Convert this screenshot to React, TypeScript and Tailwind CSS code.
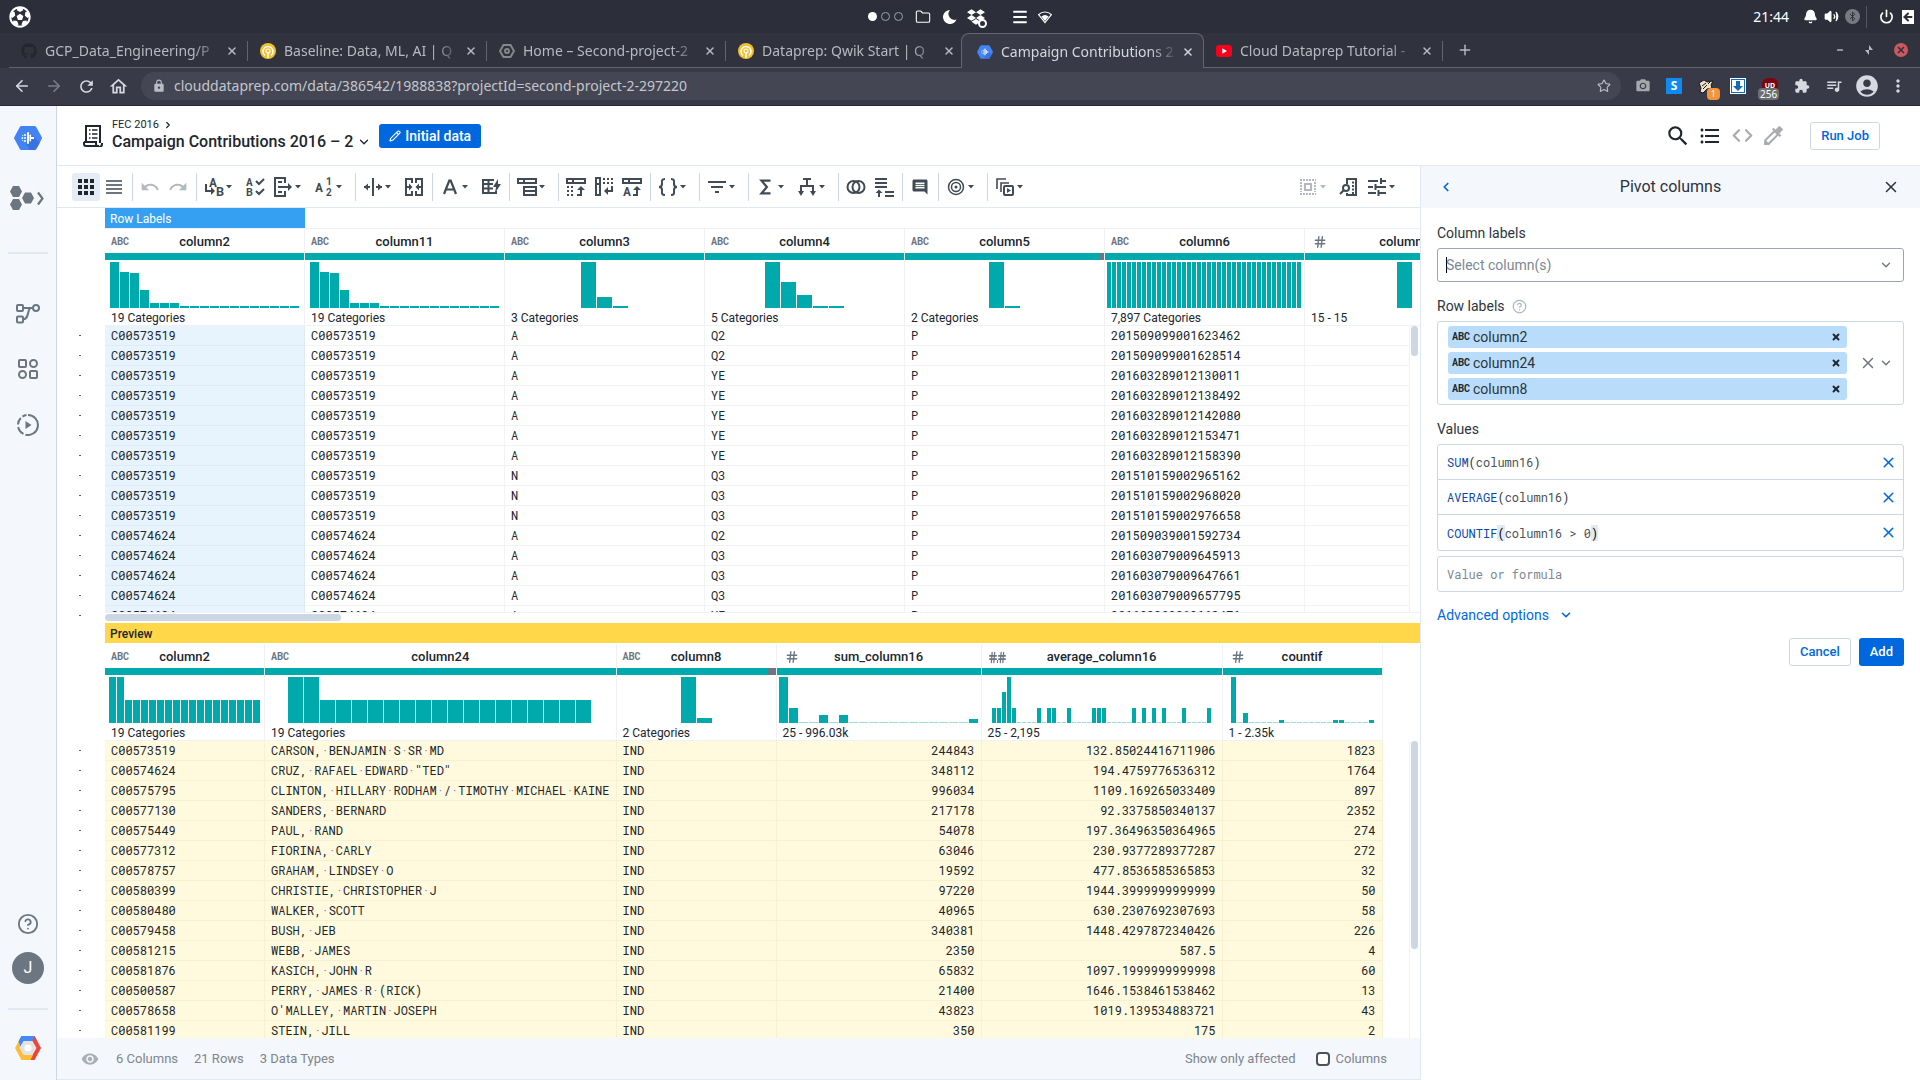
import React from "react";
import {
  ArrowLeft, ArrowRight, Star, Folder, Menu, Bell, Volume2, Bluetooth,
  Power, X, Plus, Minus, ChevronDown, ChevronLeft, ChevronRight, Hash, Pencil, Code, CircleHelp,
} from "lucide-react";
import {
  MdExtension, MdQueueMusic, MdAccountCircle, MdMoreVert, MdUndo, MdRedo, MdFilterList, MdColorize,
  MdFormatListBulleted, MdLock, MdVisibility, MdPhotoCamera, MdComment, MdRefresh, MdOutlineHome, MdSearch,
} from "react-icons/md";
import { FaDropbox, FaGithub, FaFutbol } from "react-icons/fa";

type Kids = { children?: React.ReactNode };

function Svg({ children, className = "size-5" }: Kids & { className?: string }) {
  return (
    <svg viewBox="0 0 20 20" className={className} fill="none" stroke="currentColor" strokeWidth="2" aria-hidden="true">
      {children}
    </svg>
  );
}

/* ---------- Desktop bar ---------- */

function DesktopBar() {
  return (
    <div className="grid h-[33px] shrink-0 grid-cols-[1fr_auto_1fr] items-center bg-[#2c2f3a] text-white">
      <div className="pl-[9px]">
        <FaFutbol className="size-[22px]" />
      </div>
      <div className="flex items-center">
        <span className="flex items-center gap-1">
          <span className="size-[9px] rounded-full bg-white" />
          <span className="size-[9px] rounded-full border border-gray-400" />
          <span className="size-[9px] rounded-full border border-gray-400" />
        </span>
        <Folder className="ml-3 size-4" strokeWidth={1.6} />
        <svg viewBox="0 0 14 14" className="ml-3 size-[14px] fill-current" aria-hidden="true">
          <path d="M7 0a7 7 0 1 0 6.500 9.600A6 6 0 0 1 7 0z" />
        </svg>
        <span className="relative ml-2.5 mr-[26px] size-[18px]">
          <FaDropbox className="size-[18px]" />
          <span className="absolute -bottom-0.5 -right-0.5 size-[9px] rounded-full border-2 border-white bg-[#2c2f3a]" />
        </span>
        <Menu className="size-[18px]" strokeWidth={2.5} />
        <Svg className="ml-2 size-4">
          <path d="M2 7a11.500 11.500 0 0 1 16 0L10 17z" strokeWidth="1.500" />
          <path d="M5.500 9.500a7 7 0 0 1 9 0L10 15z" fill="currentColor" strokeWidth="0" />
        </Svg>
      </div>
      <div className="flex items-center justify-end pr-1.5">
        <span className="text-sm leading-5">21:44</span>
        <Bell className="ml-[14px] size-[15px]" fill="currentColor" />
        <Volume2 className="ml-1.5 size-[15px]" fill="currentColor" />
        <span className="ml-1.5 flex size-[15px] items-center justify-center rounded-full bg-[#777a82] text-[#2c2f3a]">
          <Bluetooth className="size-[11px]" />
        </span>
        <span className="ml-1.5 h-[22px] w-px bg-[#555862]" />
        <Power className="ml-3 size-[15px]" strokeWidth={2.6} />
        <span className="ml-2 flex h-[14px] w-3 items-center bg-white text-[#2c2f3a]">
          <ArrowLeft className="size-3" strokeWidth={4} />
        </span>
      </div>
    </div>
  );
}

/* ---------- Browser chrome ---------- */

function QwikIcon() {
  return (
    <svg viewBox="0 0 16 16" className="size-4" aria-hidden="true">
      <circle cx="8" cy="8" r="8" fill="#f4bf2f" />
      <path d="M5 12.500A5 5 0 1 1 11 12.500" fill="none" stroke="#fff" strokeWidth="1.500" />
      <circle cx="8" cy="8" r="2" fill="none" stroke="#fff" strokeWidth="1.200" />
      <path d="M8 9v6" stroke="#fff" strokeWidth="1.600" />
    </svg>
  );
}
function PrepIcon({ className }: { className: string }) {
  return (
    <svg viewBox="0 0 28 26" className={className} aria-hidden="true">
      <path d="M7.500 1h13a2 2 0 0 1 1.700 1l5.500 10a2 2 0 0 1 0 2l-5.500 10a2 2 0 0 1-1.700 1h-13a2 2 0 0 1-1.700-1L.4 14a2 2 0 0 1 0-2L5.800 2A2 2 0 0 1 7.500 1z" fill="#4284f3" />
      <path d="M17.500 9.500L26 18l-4 6.500-1.500.5H16l-4-6z" fill="#3367d6" opacity=".6" />
      <g fill="#fff">
        <rect x="13" y="7" width="2" height="12" rx="1" />
        <rect x="15.500" y="9.500" width="1.600" height="7" rx=".8" />
        <path d="M17 12h3v2h-3z" />
        <circle cx="11" cy="10" r="1" /><circle cx="11" cy="13" r="1" /><circle cx="11" cy="16" r="1" />
        <circle cx="8.400" cy="13" r=".9" /><circle cx="8.800" cy="10.500" r=".6" /><circle cx="8.800" cy="15.500" r=".6" />
      </g>
    </svg>
  );
}
function ConsoleIcon() {
  return (
    <svg viewBox="0 0 16 16" className="size-4" fill="none" stroke="#85878a" strokeWidth="2" aria-hidden="true">
      <path d="M4.500 2h7L15 8l-3.500 6h-7L1 8z" />
      <circle cx="8" cy="8" r="2" />
    </svg>
  );
}
function YoutubeIcon() {
  return (
    <svg viewBox="0 0 16 16" className="size-4" aria-hidden="true">
      <rect x="0" y="2" width="16" height="12" rx="3" fill="#f8001d" />
      <path d="M6.300 5.200v5.600L11 8z" fill="#fff" />
    </svg>
  );
}

const tabs = [
  { title: "GCP_Data_Engineering/P", icon: <FaGithub className="size-4 text-[#24272e]" /> },
  { title: "Baseline: Data, ML, AI | Q", icon: <QwikIcon /> },
  { title: "Home – Second-project-2", icon: <ConsoleIcon /> },
  { title: "Dataprep: Qwik Start | Q", icon: <QwikIcon /> },
  { title: "Campaign Contributions 2", icon: <PrepIcon className="size-4" />, active: true },
  { title: "Cloud Dataprep Tutorial -", icon: <YoutubeIcon /> },
];

function TabStrip() {
  return (
    <div className="flex h-[35px] shrink-0 bg-[#30333e] pl-[9px] text-[#b6b9c1]">
      {tabs.map((t) => (
        <div
          key={t.title}
          className={
            t.active
              ? "-ml-1 flex w-[243px] items-center rounded-t-lg border border-b-0 border-[#62656e] bg-[#383b47] pl-[15px] pt-px text-[#d3d6dc]"
              : "flex w-[239px] items-center border-b border-[#62656e] pl-3 pt-0.5"
          }
        >
          <span className="shrink-0">{t.icon}</span>
          <a
            href="#tab"
            className="ml-2 w-[177px] whitespace-nowrap text-sm leading-5 [mask-image:linear-gradient(to_right,black_84%,transparent)]"
          >
            {t.title}
          </a>
          <button aria-label="Close tab" className="ml-1 shrink-0">
            <X className="size-3" strokeWidth={3} />
          </button>
          {!t.active && <span className="ml-auto h-5 w-px bg-[#62656e]" />}
        </div>
      ))}
      <div className="flex flex-1 items-center justify-between border-b border-[#62656e] pl-[14px] pr-3">
        <button aria-label="New tab"><Plus className="size-4" strokeWidth={2.2} /></button>
        <span className="flex items-center gap-5">
          <button aria-label="Minimize"><Minus className="size-2" strokeWidth={5} /></button>
          <button aria-label="Restore">
            <svg viewBox="0 0 10 10" className="size-2.5 fill-current"><path d="M5 0v5h4zM5 10V5H1z" /></svg>
          </button>
          <button aria-label="Close" className="flex size-[14px] items-center justify-center rounded-full bg-[#cc575d] text-[#30333e]">
            <X className="size-2.5" strokeWidth={4} />
          </button>
        </span>
      </div>
    </div>
  );
}

function AddressBar() {
  return (
    <div className="flex h-[38px] shrink-0 items-center border-b border-[#292936] bg-[#383b47] pb-px pl-[13px] pr-3.5 text-[#d6d9e0]">
      <div className="flex items-center gap-3.5">
        <button aria-label="Back"><ArrowLeft className="size-[18px]" strokeWidth={2.2} /></button>
        <button aria-label="Forward" className="text-[#797d87]"><ArrowRight className="size-[18px]" strokeWidth={2.2} /></button>
        <button aria-label="Reload"><MdRefresh className="size-[19px]" /></button>
        <button aria-label="Home" className="-ml-0.5"><MdOutlineHome className="size-[21px]" /></button>
      </div>
      <div className="ml-3 flex h-7 flex-1 items-center rounded-full bg-[#444753] pl-[11px] pr-2.5">
        <MdLock className="size-[14px] shrink-0 text-[#b9bcc5]" />
        <input
          aria-label="Address"
          className="ml-2 min-w-0 flex-1 bg-transparent text-sm leading-5 text-[#c3c6ce] outline-none"
          defaultValue="clouddataprep.com/data/386542/1988838?projectId=second-project-2-297220"
        />
        <button aria-label="Bookmark"><Star className="size-[14px] text-[#b9bcc5]" /></button>
      </div>
      <div className="ml-3.5 flex items-center gap-4">
        <MdPhotoCamera className="size-4 text-[#a5a7ab]" />
        <span className="-ml-px flex size-4 items-center justify-center bg-[#0d8bf0] text-xs font-bold text-white">S</span>
        <span className="relative size-4">
          <svg viewBox="0 0 16 16" className="size-4" aria-hidden="true">
            <path d="M1 5l5-3 3 2 6-1-2 4 1 3-5 1-4 4-3-1 1-4z" fill="#efe0cd" stroke="#1c1c1c" />
            <path d="M4 8l4-3M5 11l4-4M10 6l2-2" stroke="#1c1c1c" />
          </svg>
          <span className="absolute -bottom-1.5 -right-1.5 rounded-sm bg-[#f2943a] px-1 text-[9px] leading-3 text-white">1</span>
        </span>
        <svg viewBox="0 0 16 16" className="size-4" aria-hidden="true">
          <rect x=".5" y=".5" width="15" height="15" fill="#0d6db8" stroke="#fff" />
          <rect x="2" y="2" width="12" height="12" fill="#fff" />
          <path d="M6 3h4v5h3l-5 5-5-5h3z" fill="#0d6db8" />
        </svg>
        <span className="relative flex size-4 items-start justify-center rounded-t-md bg-[#7c0512] pt-1 text-[7px] font-bold leading-none text-white">
          UD
          <span className="absolute -bottom-1.5 -left-1 rounded-sm bg-[#6c6e73] px-0.5 text-[10px] font-normal leading-3">256</span>
        </span>
        <MdExtension className="size-4" />
        <MdQueueMusic className="-mx-px size-[18px]" />
        <MdAccountCircle className="-ml-1 size-[26px]" />
        <MdMoreVert className="-ml-2 -mr-0.5 size-5" />
      </div>
    </div>
  );
}

/* ---------- App rail ---------- */

function Rail() {
  return (
    <nav className="flex w-[57px] shrink-0 flex-col items-center border-r border-[#ccd7e3] bg-[#f4f7fc] text-[#6b7681]">
      <a href="#home" aria-label="Dataprep" className="mt-[19px]"><PrepIcon className="h-[26px] w-7" /></a>
      <a href="#flows" aria-label="Product switcher" className="mt-[34px]">
        <svg viewBox="0 0 36 26" className="h-[26px] w-9" aria-hidden="true">
          <g fill="currentColor">
            <path d="M3 1h6l3 5.500L9 12H3L0 6.500z" />
            <path d="M15 7.500h6l3 5.500-3 5.500h-6L12 13z" />
            <path d="M3 14h6l3 5.500L9 25H3l-3-5.500z" />
          </g>
          <path d="M28 7.500l4.500 6-4.500 6" fill="none" stroke="currentColor" strokeWidth="2.200" />
        </svg>
      </a>
      <span className="mt-[41px] h-0.5 w-10 bg-[#e1e8f1]" />
      <a href="#flow" aria-label="Flows" className="mt-[50px]">
        <svg viewBox="0 0 24 20" className="h-5 w-6" fill="none" stroke="currentColor" strokeWidth="2" aria-hidden="true">
          <rect x="1" y="1" width="6" height="6" rx="1" /><rect x="1" y="12.500" width="6" height="6" rx="1" />
          <circle cx="20" cy="4" r="3" /><path d="M7 4h10M7 15.500c6 0 4-8 7-11.500" />
        </svg>
      </a>
      <a href="#library" aria-label="Library" className="mt-[35px]">
        <Svg><rect x="1" y="1" width="7" height="7" rx="1" /><circle cx="15.500" cy="4.500" r="3.500" /><circle cx="4.500" cy="15.500" r="3.500" /><rect x="12" y="12" width="7" height="7" rx="1" /></Svg>
      </a>
      <a href="#jobs" aria-label="Jobs" className="mt-[35px]">
        <svg viewBox="0 0 22 22" className="size-[22px]" fill="none" stroke="currentColor" strokeWidth="2" aria-hidden="true">
          <path d="M11 1a10 10 0 1 1-2.500 19.700" /><path d="M6.500 19.900A10 10 0 0 1 1.200 13M1 10.500A10 10 0 0 1 3.800 4M5.500 2.600A10 10 0 0 1 9.500 1.100" />
          <path d="M8.500 7l6 4-6 4z" fill="currentColor" stroke="none" />
        </svg>
      </a>
      <a href="#help" aria-label="Help" className="mt-auto"><CircleHelp className="size-[22px]" /></a>
      <button className="mt-[17px] flex size-8 items-center justify-center rounded-full bg-[#6b7681] text-base text-white">J</button>
      <span className="mt-6 h-0.5 w-10 bg-[#e1e8f1]" />
      <a href="#cloud" aria-label="Google Cloud" className="mb-5 mt-[26px]">
        <svg viewBox="0 0 26 24" className="h-6 w-[26px]" aria-hidden="true">
          <path d="M6.500 0h13l2.500 4.500-4 4H8L3.800 5z" fill="#4688f4" />
          <path d="M19.500 0L26 12l-6.500 12h-4l-1-5 5-7-3.500-7z" fill="#ee4536" />
          <path d="M4 4.700L0 12l6.500 12h9l2.500-5H9.500l-4-7z" fill="#fdbd37" />
          <path d="M6.500 0h13l-2 5h-9l-3 6L3.500 5.500z" fill="#4688f4" />
          <path d="M8.500 5h9l4 7-4 7h-9l-4-7z" fill="#e3e3e3" />
          <circle cx="13" cy="12" r="3.500" fill="#fff" />
        </svg>
      </a>
    </nav>
  );
}

/* ---------- Recipe header ---------- */

function RecipeHeader() {
  return (
    <header className="flex h-[60px] shrink-0 items-center border-b border-[#e0e8f0] pl-[26px] pr-10 text-[#20262d]">
      <svg viewBox="0 0 20 22" className="h-[22px] w-5" fill="none" stroke="currentColor" strokeWidth="2" aria-hidden="true">
        <path d="M3 16V1h14v17M1 17h12v2a2 2 0 0 0 6 0v-1M1 17v2a2 2 0 0 0 2 2h13" />
        <path d="M6 5h1.500M9 5h5.500M6 9h1.500M9 9h5.500M6 13h1.500M9 13h5.500" strokeWidth="1.500" />
      </svg>
      <div className="ml-[9px] pb-px">
        <a href="#flow" className="flex items-center gap-1 text-[11px] leading-[14px]">
          FEC 2016 <ChevronRight className="size-2.5" strokeWidth={3} />
        </a>
        <button className="flex items-center gap-1 text-base font-medium leading-5">
          Campaign Contributions 2016 – 2 <ChevronDown className="size-3.5" strokeWidth={2.2} />
        </button>
      </div>
      <button className="ml-2 flex h-6 items-center gap-1 rounded-[3px] bg-[#0068de] px-2.5 text-sm font-medium text-white">
        <Pencil className="size-3" strokeWidth={2.2} />
        Initial data
      </button>
      <div className="ml-auto flex items-center">
        <button aria-label="Search"><MdSearch className="size-[26px]" /></button>
        <button aria-label="Recipe" className="ml-[7px]"><MdFormatListBulleted className="size-6" /></button>
        <button aria-label="Code" className="ml-2.5 text-[#a9abae]"><Code className="size-[21px]" strokeWidth={2.6} /></button>
        <button aria-label="Target" className="ml-2 text-[#a9abae]"><MdColorize className="size-[25px]" /></button>
        <button className="ml-6 h-7 rounded-[3px] border border-[#ccd7e3] px-2.5 text-[13px] font-medium leading-4 text-[#0068de]">Run Job</button>
      </div>
    </header>
  );
}

/* ---------- Toolbar ---------- */

function Tool({ label, menu, on, dim, children }: Kids & { label: string; menu?: boolean; on?: boolean; dim?: boolean }) {
  const tone = dim ? "text-[#b4b9bf]" : "text-[#414b55]";
  return (
    <button aria-label={label} className={`flex h-7 shrink-0 items-center ${tone} ${menu ? "w-[41px]" : "w-7"}`}>
      <span className={`flex size-7 items-center justify-center rounded-[3px] ${on ? "bg-[#e6ecf5] text-[#20262d]" : ""}`}>{children}</span>
      {menu && <svg viewBox="0 0 6 4" className="-ml-0.5 h-1 w-1.5 fill-current"><path d="M0 0h6L3 3.500z" /></svg>}
    </button>
  );
}
function Sep() {
  return <span className="ml-1 mr-[3px] h-7 w-px shrink-0 bg-[#ccd7e3]" />;
}
function Letter({ x, y, size = 10, children }: { x: number; y: number; size?: number; children: string }) {
  return (
    <text x={x} y={y} fontSize={size} fontWeight="700" fill="currentColor" stroke="none" className="[font-family:'Roboto_Mono','Liberation_Mono',monospace]">
      {children}
    </text>
  );
}

function Toolbar() {
  return (
    <div className="flex h-[42px] shrink-0 items-center border-b border-[#e0e8f0] pl-[15px] pr-4" role="toolbar">
      <Tool label="Grid view" on>
        <svg viewBox="0 0 16 16" className="size-4 fill-current">
          {[0, 6, 12].map((y) => [0, 6, 12].map((x) => <rect key={`${x}-${y}`} x={x} y={y} width="4" height="4" />))}
        </svg>
      </Tool>
      <Tool label="Column view">
        <svg viewBox="0 0 16 16" className="size-4 fill-[#6b7681]"><path d="M0 1h16v2H0zM0 5h16v2H0zM0 9h16v2H0zM0 13h16v2H0z" /></svg>
      </Tool>
      <Sep />
      <Tool label="Undo" dim><MdUndo className="size-5" /></Tool>
      <Tool label="Redo" dim><MdRedo className="size-5" /></Tool>
      <Sep />
      <Tool label="Rename" menu>
        <Svg><Letter x={5} y={10} size={13}>A</Letter><Letter x={12} y={19} size={13}>B</Letter><path d="M2 7v7h7" /><path d="M7 10l4 4-4 4z" fill="currentColor" strokeWidth="0" /></Svg>
      </Tool>
      <Tool label="Standardize">
        <Svg><Letter x={1} y={9} size={11}>A</Letter><Letter x={1} y={19} size={11}>B</Letter><path d="M11 4l3 3 5-5M11 14l3 3 5-5" /></Svg>
      </Tool>
      <Tool label="Extract" menu>
        <Svg><path d="M12 6V1H2v18h10v-5M5 5h4M5 10h12M5 15h4" /><path d="M15 6l4 4-4 4z" fill="currentColor" strokeWidth="0" /></Svg>
      </Tool>
      <Tool label="Change type" menu>
        <Svg><Letter x={1} y={15} size={13}>A</Letter><Letter x={12} y={8} size={10}>1</Letter><Letter x={12} y={19} size={10}>2</Letter></Svg>
      </Tool>
      <Sep />
      <Tool label="Split" menu>
        <Svg><path d="M10 1v18M1 10h6M13 10h6" /><path d="M5 6.500L1 10l4 3.500zM15 6.500l4 3.500-4 3.500z" fill="currentColor" strokeWidth="0" /></Svg>
      </Tool>
      <Tool label="Merge">
        <Svg><path d="M8 6V2H2v16h6v-4M12 6V2h6v16h-6v-4M2 10h5M13 10h5" /><path d="M5 6.500L8.500 10 5 13.500zM15 6.500L11.500 10l3.500 3.500z" fill="currentColor" strokeWidth="0" /></Svg>
      </Tool>
      <Sep />
      <Tool label="Format" menu><Svg><path d="M4 17L9.300 3.500h1.400L16 17M6 12.500h8" strokeWidth="2.200" /></Svg></Tool>
      <Tool label="Conditional">
        <Svg><path d="M13 3H2v13h13v-2M2 7h10M2 11.500h10M7.500 3v13" /><path d="M17 2l-5 8h3l-1 6 6-9h-3z" fill="currentColor" strokeWidth="0" /></Svg>
      </Tool>
      <Sep />
      <Tool label="Rows" menu><Svg><path d="M1 2h18v4H1zM7 2v4M7 10h12v8H7zM7 14h12" /></Svg></Tool>
      <Sep />
      <Tool label="Pivot">
        <Svg><path d="M1 2h18v4H1zM7 2v4M11 18h4v-7" /><path d="M11 13l4-4 4 4z" fill="currentColor" strokeWidth="0" /><path d="M1 10h8M1 14h8M1 18h8" strokeDasharray="2 2" /></Svg>
      </Tool>
      <Tool label="Unpivot">
        <Svg><path d="M2 1h4v17H2zM2 7h4M18 9v5h-6" /><path d="M14 10l-4 4 4 4z" fill="currentColor" strokeWidth="0" /><path d="M9 2h10M9 6h10" strokeDasharray="2 2" /></Svg>
      </Tool>
      <Tool label="Transpose">
        <Svg><path d="M1 2h18v4H1zM7 2v4M11 18h4v-7" /><path d="M11 13l4-4 4 4z" fill="currentColor" strokeWidth="0" /><Letter x={1} y={19} size={13}>A</Letter></Svg>
      </Tool>
      <Sep />
      <Tool label="Object" menu>
        <Svg><path d="M7 2c-4 0-3 3-3 5s-1 3-3 3c2 0 3 1 3 3s-1 5 3 5M13 2c4 0 3 3 3 5s1 3 3 3c-2 0-3 1-3 3s1 5-3 5" /></Svg>
      </Tool>
      <Sep />
      <Tool label="Filter" menu><MdFilterList className="size-6" /></Tool>
      <Sep />
      <Tool label="Group by" menu><Svg className="size-[18px]"><path d="M15 3H5l6 7-6 7h10" strokeWidth="2.500" /></Svg></Tool>
      <Tool label="Window" menu>
        <Svg><path d="M6 2h8M10 2v6M4 17V9h12v8" /><path d="M1 14l3 5 3-5zM13 14l3 5 3-5z" fill="currentColor" strokeWidth="0" /></Svg>
      </Tool>
      <Sep />
      <Tool label="Join"><Svg><circle cx="7.500" cy="10" r="6" /><circle cx="12.500" cy="10" r="6" /></Svg></Tool>
      <Tool label="Union"><Svg><path d="M1 2h12M1 6h12M1 10h12M11 15h9M11 19h9M5 20v-6" /><path d="M1.500 16L5 12.500 8.500 16z" fill="currentColor" strokeWidth="0" /></Svg></Tool>
      <Sep />
      <Tool label="Comment"><MdComment className="size-[18px]" /></Tool>
      <Sep />
      <Tool label="Target" menu><Svg><circle cx="10" cy="10" r="7.500" strokeWidth="1.500" /><circle cx="10" cy="10" r="4.500" strokeWidth="1.500" /><circle cx="10" cy="10" r="1.500" fill="currentColor" strokeWidth="0" /></Svg></Tool>
      <Sep />
      <Tool label="Macro" menu>
        <Svg><path d="M2 12V2h9M6 15V6h8" strokeWidth="1.600" /><rect x="9" y="9" width="9" height="9" rx="1" /><path d="M12 11l4 2.500-4 2.500z" fill="currentColor" strokeWidth="0" /></Svg>
      </Tool>
      <span className="flex-1" />
      <Tool label="Select" menu dim>
        <svg viewBox="0 0 16 16" className="size-4" fill="none" stroke="currentColor" strokeWidth="2" aria-hidden="true">
          <path d="M0 1h16M0 15h16M1 3v10M15 3v10" strokeDasharray="2 1" /><rect x="5" y="5" width="6" height="6" />
        </svg>
      </Tool>
      <Tool label="Search columns">
        <Svg><path d="M8 7V2h9v16H8v-2" /><circle cx="7" cy="11" r="3" /><path d="M5 13l-4 4M13 5.500h2M13 9h2M13 12.500h2M13 16h2" /></Svg>
      </Tool>
      <Tool label="Settings" menu><Svg><path d="M1 4h10M14.500 4H19M14 1v6M1 10h5M9 10h10M8.500 7v6M1 16h8M12.500 16H19M11.500 13v6" /></Svg></Tool>
    </div>
  );
}

/* ---------- Data grids ---------- */

type Col = {
  name: string; kind: "abc" | "int" | "dec"; width: string; label: string; bars: number[];
  barWidth: number; offset: number; missing?: string; right?: boolean;
};

const rep = (v: number, n: number): number[] => Array.from({ length: n }, () => v);
const sparse = (n: number, at: Record<number, number>): number[] => Array.from({ length: n }, (_, i) => at[i] ?? 0);
const skewed = [46, 36, 35, 18, 5, 5, 5, ...rep(2, 12)];

const topCols: Col[] = [
  { name: "column2", kind: "abc", width: "w-[200px]", label: "19 Categories", bars: skewed, barWidth: 9, offset: 5 },
  { name: "column11", kind: "abc", width: "w-[200px]", label: "19 Categories", bars: skewed, barWidth: 9, offset: 5 },
  { name: "column3", kind: "abc", width: "w-[200px]", label: "3 Categories", bars: [46, 11, 2], barWidth: 15, offset: 76 },
  { name: "column4", kind: "abc", width: "w-[200px]", label: "5 Categories", bars: [46, 26, 13, 2, 2], barWidth: 15, offset: 60 },
  { name: "column5", kind: "abc", width: "w-[200px]", label: "2 Categories", bars: [46, 2], barWidth: 15, offset: 84, missing: "w-1" },
  { name: "column6", kind: "abc", width: "w-[200px]", label: "7,897 Categories", bars: rep(46, 39), barWidth: 4, offset: 2 },
  { name: "column7", kind: "int", width: "w-[200px]", label: "15 - 15", bars: [46], barWidth: 15, offset: 92 },
];

const previewCols: Col[] = [
  { name: "column2", kind: "abc", width: "w-40", label: "19 Categories", bars: [46, 46, ...rep(23, 17)], barWidth: 7, offset: 4 },
  { name: "column24", kind: "abc", width: "w-[351px]", label: "19 Categories", bars: [46, 46, ...rep(23, 17)], barWidth: 15, offset: 23 },
  { name: "column8", kind: "abc", width: "w-40", label: "2 Categories", bars: [46, 5], barWidth: 15, offset: 64, missing: "w-2" },
  { name: "sum_column16", kind: "int", width: "w-[205px]", label: "25 - 996.03k", bars: sparse(20, { 0: 46, 1: 15, 4: 8, 6: 8, 19: 4 }), barWidth: 9, offset: 2, right: true },
  {
    name: "average_column16", kind: "dec", width: "w-[241px]", label: "25 - 2,195",
    bars: sparse(44, { 0: 15, 1: 15, 2: 31, 3: 46, 4: 15, 9: 15, 11: 15, 12: 15, 15: 15, 20: 15, 21: 15, 22: 15, 28: 15, 30: 15, 32: 15, 34: 15, 38: 15, 43: 15 }),
    barWidth: 4, offset: 10, right: true,
  },
  { name: "countif", kind: "int", width: "w-40", label: "1 - 2.35k", bars: sparse(24, { 0: 46, 2: 10, 8: 3, 17: 3, 18: 3, 23: 3 }), barWidth: 5, offset: 8, right: true },
];

function Abc({ className }: { className: string }) {
  return (
    <span className={`text-[10px] font-bold leading-3 [font-family:'Roboto_Mono','Liberation_Mono',monospace] ${className}`}>ABC</span>
  );
}
function Kind({ kind }: { kind: Col["kind"] }) {
  if (kind === "abc") return <Abc className="text-[#6b7681]" />;
  return (
    <span className="flex items-end text-[#6b7681]">
      {kind === "int" ? <Hash className="ml-0.5 size-[14px]" strokeWidth={2.4} /> : (
        <>
          <Hash className="h-[13px] w-2.5" strokeWidth={3} preserveAspectRatio="none" />
          <span className="-mx-px mb-px h-[3px] w-px bg-current" />
          <Hash className="h-[13px] w-2.5" strokeWidth={3} preserveAspectRatio="none" />
        </>
      )}
    </span>
  );
}

function ColumnHead({ col }: { col: Col }) {
  return (
    <th className="border-b border-r border-[#eff1f4] p-0 text-left align-top font-normal">
      <div className="relative flex h-6 items-center pl-1.5 pt-0.5">
        <Kind kind={col.kind} />
        <span className="absolute inset-x-0 text-center text-[13px] font-medium leading-5">{col.name}</span>
      </div>
      <div className="flex h-[7px] bg-[#00a9ab]">
        {col.missing && <span className={`ml-auto h-full bg-[#6b7681] ${col.missing}`} />}
      </div>
      <div className="mt-0.5 flex h-[46px] items-end gap-px overflow-hidden" style={{ paddingLeft: col.offset }}>
        {col.bars.map((h, i) => (
          <span key={i} className={h ? "shrink-0 bg-[#00a9ab]" : "shrink-0 bg-[#99dddd]"} style={{ width: col.barWidth, height: h || 1 }} />
        ))}
      </div>
      <div className="h-[17px] pl-1.5 pt-0.5 text-xs leading-4">{col.label}</div>
    </th>
  );
}

function Dotted({ text }: { text: string }) {
  const parts = text.split(" ");
  return (
    <>
      {parts.map((p, i) => (
        <React.Fragment key={i}>
          {i > 0 && <span className="text-[#b45cf0]">·</span>}
          {p}
        </React.Fragment>
      ))}
    </>
  );
}

function DataTable({ cols, rows, tone }: { cols: Col[]; rows: string[][]; tone: "plain" | "preview" }) {
  const cell = tone === "preview" ? "border-[#f7f0d3] bg-[#fffade]" : "border-[#f2f3f5] first:border-[#dcebf7] first:bg-[#e7f4fe]";
  return (
    <table className="w-max table-fixed border-separate border-spacing-0">
      <colgroup>{cols.map((c) => <col key={c.name} className={c.width} />)}</colgroup>
      <thead><tr>{cols.map((c) => <ColumnHead key={c.name} col={c} />)}</tr></thead>
      <tbody className="[font-family:'Roboto_Mono','Liberation_Mono',monospace]">
        {rows.map((r, i) => (
          <tr key={i}>
            {r.map((v, j) => (
              <td key={j} className={`h-5 whitespace-nowrap border-b border-r p-0 px-1.5 text-xs leading-[19px] ${cell} ${cols[j].right ? "text-right" : ""}`}>
                {j === 1 && tone === "preview" ? <Dotted text={v} /> : v}
              </td>
            ))}
          </tr>
        ))}
      </tbody>
    </table>
  );
}

const topRows: string[][] = [
  ["C00573519", "A", "Q2", "201509099001623462"],
  ["C00573519", "A", "Q2", "201509099001628514"],
  ["C00573519", "A", "YE", "201603289012130011"],
  ["C00573519", "A", "YE", "201603289012138492"],
  ["C00573519", "A", "YE", "201603289012142080"],
  ["C00573519", "A", "YE", "201603289012153471"],
  ["C00573519", "A", "YE", "201603289012158390"],
  ["C00573519", "N", "Q3", "201510159002965162"],
  ["C00573519", "N", "Q3", "201510159002968020"],
  ["C00573519", "N", "Q3", "201510159002976658"],
  ["C00574624", "A", "Q2", "201509039001592734"],
  ["C00574624", "A", "Q3", "201603079009645913"],
  ["C00574624", "A", "Q3", "201603079009647661"],
  ["C00574624", "A", "Q3", "201603079009657795"],
  ["C00574624", "A", "YE", "201603289012162471"],
].map(([id, a, q, n]) => [id, id, a, q, "P", n, ""]);

const previewRows: string[][] = [
  ["C00573519", "CARSON, BENJAMIN S SR MD", "244843", "132.85024416711906", "1823"],
  ["C00574624", 'CRUZ, RAFAEL EDWARD "TED"', "348112", "194.4759776536312", "1764"],
  ["C00575795", "CLINTON, HILLARY RODHAM / TIMOTHY MICHAEL KAINE", "996034", "1109.169265033409", "897"],
  ["C00577130", "SANDERS, BERNARD", "217178", "92.3375850340137", "2352"],
  ["C00575449", "PAUL, RAND", "54078", "197.36496350364965", "274"],
  ["C00577312", "FIORINA, CARLY", "63046", "230.9377289377287", "272"],
  ["C00578757", "GRAHAM, LINDSEY O", "19592", "477.8536585365853", "32"],
  ["C00580399", "CHRISTIE, CHRISTOPHER J", "97220", "1944.3999999999999", "50"],
  ["C00580480", "WALKER, SCOTT", "40965", "630.2307692307693", "58"],
  ["C00579458", "BUSH, JEB", "340381", "1448.4297872340426", "226"],
  ["C00581215", "WEBB, JAMES", "2350", "587.5", "4"],
  ["C00581876", "KASICH, JOHN R", "65832", "1097.1999999999998", "60"],
  ["C00500587", "PERRY, JAMES R (RICK)", "21400", "1646.1538461538462", "13"],
  ["C00578658", "O'MALLEY, MARTIN JOSEPH", "43823", "1019.139534883721", "43"],
  ["C00581199", "STEIN, JILL", "350", "175", "2"],
].map(([id, name, sum, avg, n]) => [id, name, "IND", sum, avg, n]);

function Gutter() {
  return (
    <div className="w-12 shrink-0 overflow-hidden pt-[117px]" aria-hidden="true">
      {rep(0, 15).map((_, i) => (
        <span key={i} className="flex h-5 items-center pl-[22px]">
          <span className="h-px w-0.5 bg-[#59626b]" />
        </span>
      ))}
    </div>
  );
}

function Grids() {
  return (
    <div className="flex min-h-0 flex-1 flex-col text-[#20262d]">
      <section className="flex min-h-0 flex-1" aria-label="Source data">
        <Gutter />
        <div className="flex min-w-0 flex-1 flex-col">
          <h2 className="h-5 w-[200px] shrink-0 bg-[#359ff2] px-[5px] text-xs leading-[22px] text-white">Row Labels</h2>
          <div className="relative min-h-0 flex-1 overflow-hidden border-b border-t border-[#eff1f4]">
            <DataTable cols={topCols} rows={topRows} tone="plain" />
            <div className="absolute bottom-0 right-0 top-[97px] w-[11px] border-l border-[#eff1f4] bg-white pl-px">
              <div className="h-[30px] w-[7px] rounded-full bg-[#ccd7e3]" />
            </div>
          </div>
          <div className="h-2.5 shrink-0 pt-px">
            <div className="h-[7px] w-[236px] rounded bg-[#ccd7e3]" />
          </div>
        </div>
      </section>
      <section className="flex min-h-0 flex-1" aria-label="Preview data">
        <Gutter />
        <div className="flex min-w-0 flex-1 flex-col">
          <h2 className="h-5 shrink-0 bg-[#ffd748] px-[5px] text-xs font-medium leading-[22px]">Preview</h2>
          <div className="relative min-h-0 flex-1 overflow-hidden pt-px">
            <DataTable cols={previewCols} rows={previewRows} tone="preview" />
            <div className="absolute bottom-0 right-0 top-[98px] w-[11px] border-l border-[#eff1f4] bg-white pl-px">
              <div className="h-[208px] w-[7px] rounded-full bg-[#ccd7e3]" />
            </div>
          </div>
        </div>
      </section>
    </div>
  );
}

function StatusBar() {
  return (
    <footer className="flex h-[42px] shrink-0 items-center border-b border-[#e0e8f0] bg-[#f4f7fc] pl-6 pr-[33px] text-[13px] leading-5 text-[#7d858e]">
      <MdVisibility className="size-[18px] text-[#a9afb6]" />
      <span className="ml-[17px]">6 Columns</span>
      <span className="ml-4">21 Rows</span>
      <span className="ml-4">3 Data Types</span>
      <span className="ml-auto">Show only affected</span>
      <label className="ml-5 flex items-center gap-1.5">
        <input type="checkbox" className="size-[14px] appearance-none rounded-sm border-2 border-[#4a525a] bg-white" />
        Columns
      </label>
    </footer>
  );
}

/* ---------- Pivot panel ---------- */

const formulas = [
  { fn: "SUM", arg: "column16" },
  { fn: "AVERAGE", arg: "column16" },
  { fn: "COUNTIF", arg: "column16 > 0", match: true },
];

function PivotPanel() {
  return (
    <aside className="flex w-[500px] shrink-0 flex-col border-l border-[#e0e8f0] bg-white text-[#2c343c]">
      <div className="flex h-[42px] items-center bg-[#f4f7fc] pl-[18px] pr-5">
        <button aria-label="Back" className="text-[#0068de]"><ChevronLeft className="size-[14px]" strokeWidth={3} /></button>
        <h1 className="flex-1 pl-1.5 text-center text-base">Pivot columns</h1>
        <button aria-label="Close"><X className="size-[18px]" strokeWidth={2} /></button>
      </div>
      <form className="flex flex-col px-4 pt-[15px]" onSubmit={(e) => e.preventDefault()}>
        <label htmlFor="column-labels" className="text-sm leading-5">Column labels</label>
        <div className="mt-[5px] flex h-[34px] items-center rounded-[3px] border border-[#98a6b3] pl-2 pr-2.5">
          <span className="-mr-px h-4 w-px bg-black" />
          <input id="column-labels" placeholder="Select column(s)" className="min-w-0 flex-1 text-sm outline-none placeholder:text-[#7d8893]" />
          <ChevronDown className="size-[14px] text-[#6b7681]" strokeWidth={2.4} />
        </div>

        <div className="mt-[14px] flex h-5 items-center gap-[7px]">
          <label htmlFor="row-labels" className="text-sm leading-5">Row labels</label>
          <CircleHelp className="size-[15px] text-[#a9b7c4]" strokeWidth={2} />
        </div>
        <div id="row-labels" className="mt-[5px] flex items-center rounded-[3px] border border-[#ccd7e3] py-1 pl-2.5 pr-2.5">
          <ul className="flex flex-1 flex-col gap-1">
            {["column2", "column24", "column8"].map((c) => (
              <li key={c} className="flex h-[22px] items-center rounded-[3px] bg-[#badcfb] pl-1 pr-1.5 text-sm leading-5">
                <Abc className="mr-[3px] text-[#20262d]" />
                {c}
                <button type="button" aria-label={`Remove ${c}`} className="ml-auto text-[#20262d]"><X className="size-2.5" strokeWidth={4.5} /></button>
              </li>
            ))}
          </ul>
          <button type="button" aria-label="Clear row labels" className="ml-3 text-[#6b7681]"><X className="size-[18px]" strokeWidth={2} /></button>
          <button type="button" aria-label="Open row labels" className="ml-0.5 text-[#6b7681]"><ChevronDown className="size-[14px]" strokeWidth={2.4} /></button>
        </div>

        <h2 className="mt-[14px] text-sm leading-5">Values</h2>
        <ul className="mt-[5px] divide-y divide-[#ccd7e3] rounded-[3px] border border-[#ccd7e3] text-xs [font-family:'Roboto_Mono','Liberation_Mono',monospace]">
          {formulas.map((f) => (
            <li key={f.fn} className="flex h-[35px] items-center pl-[9px] pr-1.5">
              <span className="text-[#0a48ab]">{f.fn}</span>
              <span className={f.match ? "bg-[#e3eaf3] text-black" : ""}>(</span>
              <span className="whitespace-pre text-[#4a525a]">{f.arg}</span>
              <span className={f.match ? "bg-[#e3eaf3] text-black" : ""}>)</span>
              <button type="button" aria-label={`Remove ${f.fn}`} className="ml-auto text-[#0068de]"><X className="size-[17px]" strokeWidth={2.2} /></button>
            </li>
          ))}
        </ul>
        <input
          aria-label="Value or formula"
          placeholder="Value or formula"
          className="mt-[5px] h-9 rounded-[3px] border border-[#ccd7e3] px-[9px] text-xs outline-none [font-family:'Roboto_Mono','Liberation_Mono',monospace] placeholder:text-[#7d8893]"
        />
        <button type="button" className="mt-[13px] flex items-center gap-2.5 self-start text-sm leading-5 text-[#0068de]">
          Advanced options <ChevronDown className="size-[14px]" strokeWidth={2.8} />
        </button>
        <div className="mt-[13px] flex justify-end gap-2 text-[13px] font-medium leading-4">
          <button type="button" className="h-7 rounded-[3px] border border-[#ccd7e3] px-2.5 text-[#0068de]">Cancel</button>
          <button type="submit" className="h-7 rounded-[3px] bg-[#0068de] px-[11px] text-white">Add</button>
        </div>
      </form>
    </aside>
  );
}

export default function App() {
  return (
    <div className="flex h-screen flex-col overflow-hidden bg-white [font-family:Roboto,'Liberation_Sans',sans-serif]">
      <div className="flex shrink-0 flex-col [font-family:'Noto_Sans',sans-serif]">
        <DesktopBar />
        <TabStrip />
        <AddressBar />
      </div>
      <div className="flex min-h-0 flex-1">
        <Rail />
        <div className="flex min-w-0 flex-1 flex-col">
          <RecipeHeader />
          <div className="flex min-h-0 flex-1">
            <main className="flex min-w-0 flex-1 flex-col">
              <Toolbar />
              <Grids />
              <StatusBar />
            </main>
            <PivotPanel />
          </div>
        </div>
      </div>
    </div>
  );
}
